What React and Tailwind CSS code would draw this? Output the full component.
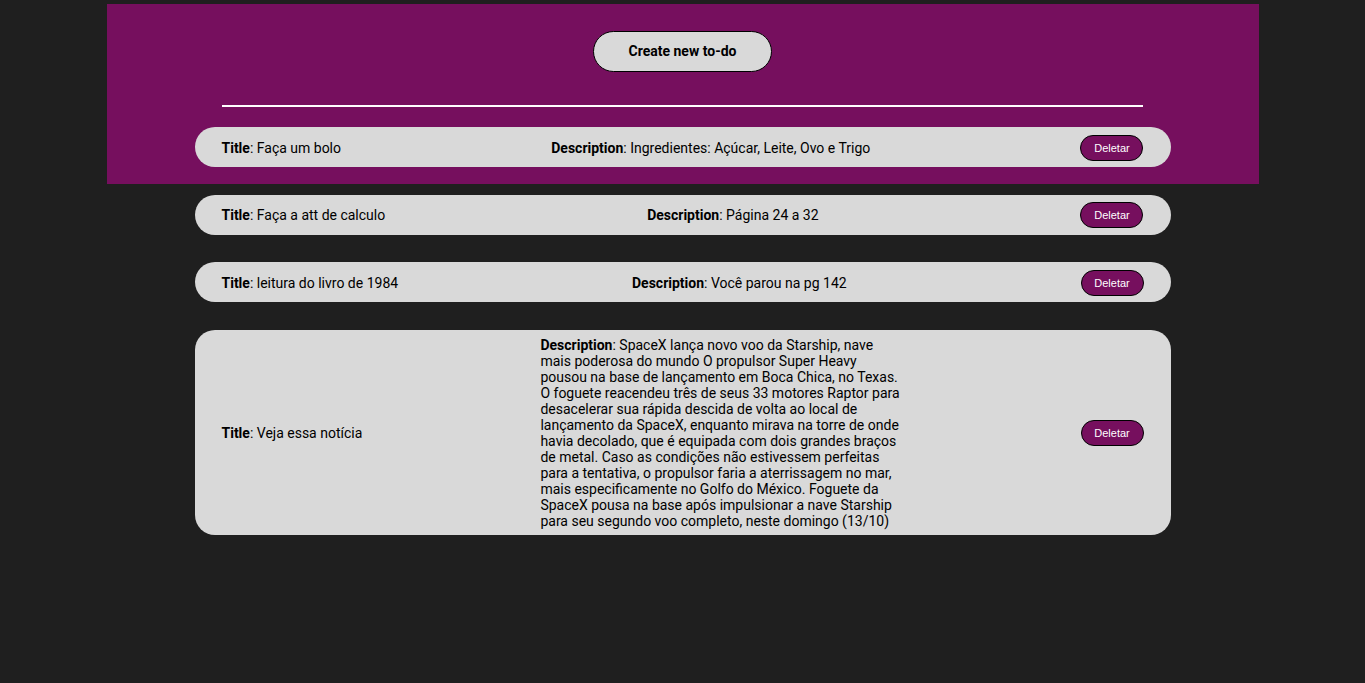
import React from 'react';

const todos = [
  { title: 'Faça um bolo', description: 'Ingredientes: Açúcar, Leite, Ovo e Trigo' },
  { title: 'Faça a att de calculo', description: 'Página 24 a 32' },
  { title: 'leitura do livro de 1984', description: 'Você parou na pg 142' },
  {
    title: 'Veja essa notícia',
    description:
      'SpaceX lança novo voo da Starship, nave mais poderosa do mundo O propulsor Super Heavy pousou na base de lançamento em Boca Chica, no Texas. O foguete reacendeu três de seus 33 motores Raptor para desacelerar sua rápida descida de volta ao local de lançamento da SpaceX, enquanto mirava na torre de onde havia decolado, que é equipada com dois grandes braços de metal. Caso as condições não estivessem perfeitas para a tentativa, o propulsor faria a aterrissagem no mar, mais especificamente no Golfo do México. Foguete da SpaceX pousa na base após impulsionar a nave Starship para seu segundo voo completo, neste domingo (13/10)',
  },
];

function TodoCard({ todo }) {
  return (
    <div className="w-[976px] min-h-[40px] mx-auto bg-[#d9d9d9] rounded-[20px] flex items-center justify-between px-[27px] pt-[7px] pb-[6px] text-[14px] leading-[16px] text-black">
      <p>
        <b>Title</b>: {todo.title}
      </p>
      <p className="max-w-[362px]">
        <b>Description</b>: {todo.description}
      </p>
      <button className="w-[63px] h-[26px] rounded-full bg-[#760f5e] border border-black text-white text-[11px] leading-none pt-px font-['Liberation_Sans',Arial,sans-serif]">
        Deletar
      </button>
    </div>
  );
}

export default function App() {
  return (
    <div className="min-h-screen bg-[#1f1f1f] pt-1 font-['Roboto',sans-serif]">
      {/* header fixo de 180px, a lista passa por cima */}
      <div className="w-[1152px] h-[180px] mx-auto bg-[#760f5e] pt-[27px]">
        <div className="flex justify-center">
          <button className="w-[179px] h-[41px] rounded-full bg-[#d9d9d9] border border-black text-[14px] font-bold text-black">
            Create new to-do
          </button>
        </div>
        <div className="w-[921px] h-[2px] bg-white mx-auto mt-[33px]" />
        <div className="mt-[20px] flex flex-col gap-[27.5px]">
          {todos.map((todo, i) => (
            <TodoCard key={i} todo={todo} />
          ))}
        </div>
      </div>
    </div>
  );
}
